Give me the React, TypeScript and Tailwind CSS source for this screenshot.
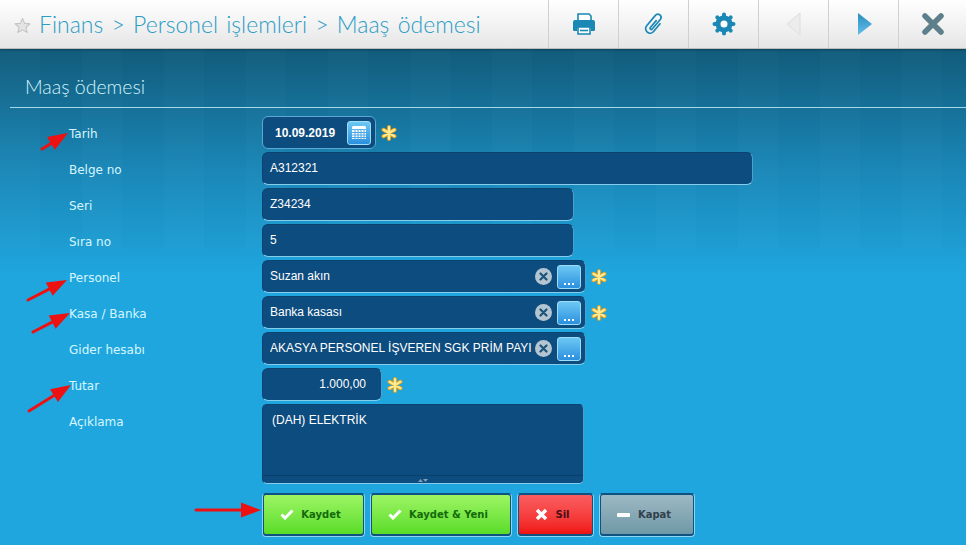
import React from "react";

const Star = () => (
  <svg width="17" height="17" viewBox="0 0 24 24" className="mr-[8px] mt-[2px]">
    <path d="M12 2l3 7 7.500.7-5.700 5 1.800 7.300L12 18.200 5.400 22l1.800-7.300-5.700-5L9 9z" fill="#e4e4e4" stroke="#c4c4c4" strokeWidth="1.500" strokeLinejoin="round" />
  </svg>
);

const Asterisk = () => (
  <svg width="16" height="16" viewBox="0 0 16 16" className="shrink-0">
    <g stroke="#e0a020" strokeWidth="4" strokeLinecap="round">
      <path d="M8 2v12M2.500 4.800l11 6.400M13.500 4.800l-11 6.400" />
    </g>
    <g stroke="#ffeb94" strokeWidth="2.200" strokeLinecap="round">
      <path d="M8 2v12M2.500 4.800l11 6.400M13.500 4.800l-11 6.400" />
    </g>
  </svg>
);

const Clear = () => (
  <span className="w-[17px] h-[17px] rounded-full bg-[#b4c5d2] flex items-center justify-center shrink-0">
    <svg width="9" height="9" viewBox="0 0 9 9"><path d="M1.500 1.500l6 6M7.500 1.500l-6 6" stroke="#1c5378" strokeWidth="2.200" strokeLinecap="round" /></svg>
  </span>
);

const Dots = () => (
  <span className="w-[24px] h-[24px] rounded-[3px] border border-[#9fdcf8] bg-gradient-to-b from-[#6cc8f4] to-[#2a90de] flex items-end justify-center pb-[3px] gap-[2px] shrink-0">
    <i className="w-[2px] h-[2px] bg-white block" />
    <i className="w-[2px] h-[2px] bg-white block" />
    <i className="w-[2px] h-[2px] bg-white block" />
  </span>
);

const Calendar = () => (
  <span className="w-[24px] h-[24px] rounded-[3px] border border-[#9fdcf8] bg-gradient-to-b from-[#6cc8f4] to-[#2a90de] flex items-center justify-center shrink-0">
    <svg width="16" height="15" viewBox="0 0 16 15">
      <path d="M2 1h12l1 1v2H1V2z" fill="#fff" />
      <path d="M1 5h14v9H1z" fill="#fff" />
      <path d="M1 7.500h14M1 10h14M1 12.500h14M4 5v9M7 5v9M10 5v9M13 5v9" stroke="#4aa8e8" strokeWidth="1" />
    </svg>
  </span>
);

const Box = ({ w, children, className = "" }: { w: string; children?: React.ReactNode; className?: string }) => (
  <div className={`${w} h-[33px] rounded-[6px] bg-[#0d4c7e] border border-[#0b4270] border-b-[#86cdec] border-r-[#4f9ecb] flex items-center text-[12px] text-white font-['Liberation_Sans',sans-serif] ${className}`}>
    {children}
  </div>
);

const Row = ({ label, children }: { label: string; children: React.ReactNode }) => (
  <div className="flex items-start">
    <div className="w-[262px] pl-[69px] pt-[10px] text-[12px] leading-[16px] text-[#d6f6ff] font-['DejaVu_Sans',sans-serif]">{label}</div>
    <div className="flex items-center gap-[5px]">{children}</div>
  </div>
);

const ToolBtn = ({ children, last }: { children: React.ReactNode; last?: boolean }) => (
  <div className={`${last ? "w-[68px]" : "w-[70px]"} h-[48px] border-l border-[#d0d0d0] flex items-center justify-center`}>{children}</div>
);

const Btn = ({ w, bg, text, icon, label }: { w: string; bg: string; text: string; icon: React.ReactNode; label: string }) => (
  <div className={`${w} h-[44px] rounded-[4px] border border-[#8fd6f4] border-t-[#0f5282] bg-[#0f5282] p-[1px] pb-[2px]`}>
    <div className={`w-full h-full ${bg} ${text} rounded-[2px] flex items-center justify-center gap-[7px] pr-[6px] text-[10px] font-bold font-['DejaVu_Sans',sans-serif]`}>
      {icon}
      <span>{label}</span>
    </div>
  </div>
);

const Check = () => (
  <svg width="14" height="11" viewBox="0 0 14 11"><path d="M1.500 5.500l3.500 3.500 7.500-7.500" fill="none" stroke="#fff" strokeWidth="3" /></svg>
);

const Arrow = ({ x1, y1, x2, y2 }: { x1: number; y1: number; x2: number; y2: number }) => {
  const a = Math.atan2(y2 - y1, x2 - x1);
  const len = 20;
  const bx = x2 - Math.cos(a) * len;
  const by = y2 - Math.sin(a) * len;
  const px = -Math.sin(a) * 7.5;
  const py = Math.cos(a) * 7.5;
  return (
    <g>
      <line x1={x1} y1={y1} x2={bx} y2={by} stroke="#ee1111" strokeWidth="3" strokeLinecap="round" />
      <polygon points={`${x2},${y2} ${bx + px},${by + py} ${bx - px},${by - py}`} fill="#ee1111" />
    </g>
  );
};

export default function App() {
  return (
    <div className="relative isolate w-[966px] h-[545px] overflow-hidden bg-gradient-to-b from-[#115c7c] from-[48px] via-[#1a88b8] via-[170px] to-[#1fa6de] to-[275px]">
      <div className="absolute -z-10 left-0 right-0 top-[49px] h-[200px] bg-[repeating-linear-gradient(90deg,rgba(255,255,255,0.01)_0,rgba(255,255,255,0.01)_40px,rgba(0,0,0,0.008)_40px,rgba(0,0,0,0.008)_82px)]" />
      <div className="h-[49px] bg-gradient-to-b from-white to-[#e6e6e6] border-b border-[#bdbdbd] flex items-center justify-between pl-[14px] shadow-[0_1px_2px_rgba(0,0,0,0.3)]">
        <div className="flex items-center text-[23px] [word-spacing:2px] font-light text-[#2b9cc6] font-['Lato',sans-serif] whitespace-pre">
          <Star />
          <span>Finans &gt; Personel işlemleri &gt; Maaş ödemesi</span>
        </div>
        <div className="flex">
          <ToolBtn>
            <svg width="24" height="24" viewBox="0 0 24 24">
              <path d="M6 2h11l2 2v5H6z" fill="#fff" stroke="#1a87b5" strokeWidth="1.600" />
              <path d="M3 8h18a2 2 0 0 1 2 2v8a1 1 0 0 1-1 1h-3v-3H5v3H2a1 1 0 0 1-1-1v-8a2 2 0 0 1 2-2z" fill="#1a87b5" />
              <path d="M6 15h12v7H6z" fill="#fff" stroke="#1a87b5" strokeWidth="1.600" />
              <path d="M8 18.500h8" stroke="#1a87b5" strokeWidth="1.600" />
            </svg>
          </ToolBtn>
          <ToolBtn>
            <svg width="24" height="24" viewBox="-12 -12 24 24" fill="none">
              <path d="M4.500 -4V6a4.500 4.500 0 0 1-9 0V-7.500a3.200 3.200 0 0 1 6.400 0V5a1.200 1.200 0 0 1-2.400 0V-4" stroke="#1a87b5" strokeWidth="1.700" strokeLinecap="round" transform="rotate(40)" />
            </svg>
          </ToolBtn>
          <ToolBtn>
            <svg width="24" height="24" viewBox="0 0 24 24">
              <circle cx="12" cy="12" r="8.500" fill="#1a87b5" />
              <g stroke="#1a87b5" strokeWidth="4" strokeLinecap="round">
                <path d="M12 2.500v19M2.500 12h19M5.300 5.300l13.400 13.400M18.700 5.300L5.300 18.700" />
              </g>
              <circle cx="12" cy="12" r="3.500" fill="#fff" />
            </svg>
          </ToolBtn>
          <ToolBtn>
            <svg width="16" height="24" viewBox="0 0 16 24"><path d="M14 1v22L1 12z" fill="#ececec" stroke="#dedede" /></svg>
          </ToolBtn>
          <ToolBtn>
            <svg width="16" height="24" viewBox="0 0 16 24">
              <defs><linearGradient id="nx" x1="0" y1="0" x2="0" y2="1"><stop offset="0" stopColor="#2a8cbd" /><stop offset="1" stopColor="#62bfea" /></linearGradient></defs>
              <path d="M2 1v22l14-11z" fill="url(#nx)" />
            </svg>
          </ToolBtn>
          <ToolBtn last>
            <svg width="24" height="24" viewBox="0 0 24 24"><path d="M4 4l16 16M20 4L4 20" stroke="#5c7f8a" strokeWidth="5.500" strokeLinecap="round" /></svg>
          </ToolBtn>
        </div>
      </div>

      <div className="ml-[10px] h-[59px] border-b border-[#a7d8ea] pl-[15px] pt-[26px] text-[19.5px] leading-[24px] font-light text-[#d2f2fb] font-['Lato',sans-serif]">
        Maaş ödemesi
      </div>

      <div className="mt-[8px] flex flex-col gap-[3px]">
        <Row label="Tarih">
          <Box w="w-[114px]" className="justify-between pl-[12px] pr-[4px] font-bold !border-[#5aa9d2]">
            <span>10.09.2019</span>
            <Calendar />
          </Box>
          <Asterisk />
        </Row>
        <Row label="Belge no"><Box w="w-[491px]" className="px-[7px]"><span className="pb-[2px]">A312321</span></Box></Row>
        <Row label="Seri"><Box w="w-[312px]" className="px-[7px]"><span className="pb-[2px]">Z34234</span></Box></Row>
        <Row label="Sıra no"><Box w="w-[312px]" className="px-[7px]"><span className="pb-[2px]">5</span></Box></Row>
        <Row label="Personel">
          <Box w="w-[324px]" className="pl-[7px] pr-[4px]">
            <span className="flex-1 pb-[2px]">Suzan akın</span>
            <Clear /><span className="w-[5px]" /><Dots />
          </Box>
          <Asterisk />
        </Row>
        <Row label="Kasa / Banka">
          <Box w="w-[324px]" className="pl-[7px] pr-[4px]">
            <span className="flex-1 pb-[2px]">Banka kasası</span>
            <Clear /><span className="w-[5px]" /><Dots />
          </Box>
          <Asterisk />
        </Row>
        <Row label="Gider hesabı">
          <Box w="w-[324px]" className="pl-[7px] pr-[4px]">
            <span className="flex-1 pb-[2px] whitespace-nowrap overflow-hidden">AKASYA PERSONEL İŞVEREN SGK PRİM PAYI</span>
            <Clear /><span className="w-[5px]" /><Dots />
          </Box>
        </Row>
        <Row label="Tutar">
          <Box w="w-[120px]" className="justify-end pr-[15px]"><span className="pb-[2px]">1.000,00</span></Box>
          <Asterisk />
        </Row>
        <Row label="Açıklama">
          <div className="relative w-[322px] h-[80px] rounded-[5px] bg-[#0d4c7e] border border-[#0b4270] border-b-[#86cdec] border-r-[#4f9ecb] px-[9px] pt-[7px] text-[12px] leading-[16px] text-white font-['Liberation_Sans',sans-serif]">
            (DAH) ELEKTRİK
            <div className="absolute left-0 right-0 bottom-0 h-[8px] border-t border-[#0b3f69] flex items-center justify-center gap-[1px]">
              <svg width="10" height="4" viewBox="0 0 10 4"><path d="M0 4l2.500-3L5 4z" fill="#7f9fb8" /><path d="M5 1h5L7.500 4z" fill="#7f9fb8" /></svg>
            </div>
          </div>
        </Row>
      </div>

      <div className="mt-[9px] ml-[262px] flex gap-[5px]">
        <Btn w="w-[103px]" bg="bg-gradient-to-b from-[#9cf562] to-[#58dc26]" text="text-[#136a0c]" icon={<Check />} label="Kaydet" />
        <Btn w="w-[142px]" bg="bg-gradient-to-b from-[#9cf562] to-[#58dc26]" text="text-[#136a0c]" icon={<Check />} label="Kaydet & Yeni" />
        <Btn w="w-[77px]" bg="bg-gradient-to-b from-[#fb5c60] to-[#f01010]" text="text-[#4a1018]" icon={<svg width="13" height="13" viewBox="0 0 13 13"><path d="M2 2l9 9M11 2l-9 9" stroke="#fff" strokeWidth="3.500" /></svg>} label="Sil" />
        <Btn w="w-[96px]" bg="bg-gradient-to-b from-[#9db9c4] to-[#6f98a6]" text="text-[#33404c]" icon={<span className="w-[13px] h-[4px] rounded-[1px] bg-white block mr-[1px]" />} label="Kapat" />
      </div>

      <svg className="absolute inset-0 pointer-events-none" width="966" height="545">
        <Arrow x1={42} y1={149} x2={68} y2={133} />
        <Arrow x1={28} y1={300} x2={67} y2={280} />
        <Arrow x1={33} y1={332} x2={70} y2={313} />
        <Arrow x1={29} y1={411} x2={71} y2={385} />
        <Arrow x1={196} y1={510} x2={261} y2={510} />
      </svg>
    </div>
  );
}
